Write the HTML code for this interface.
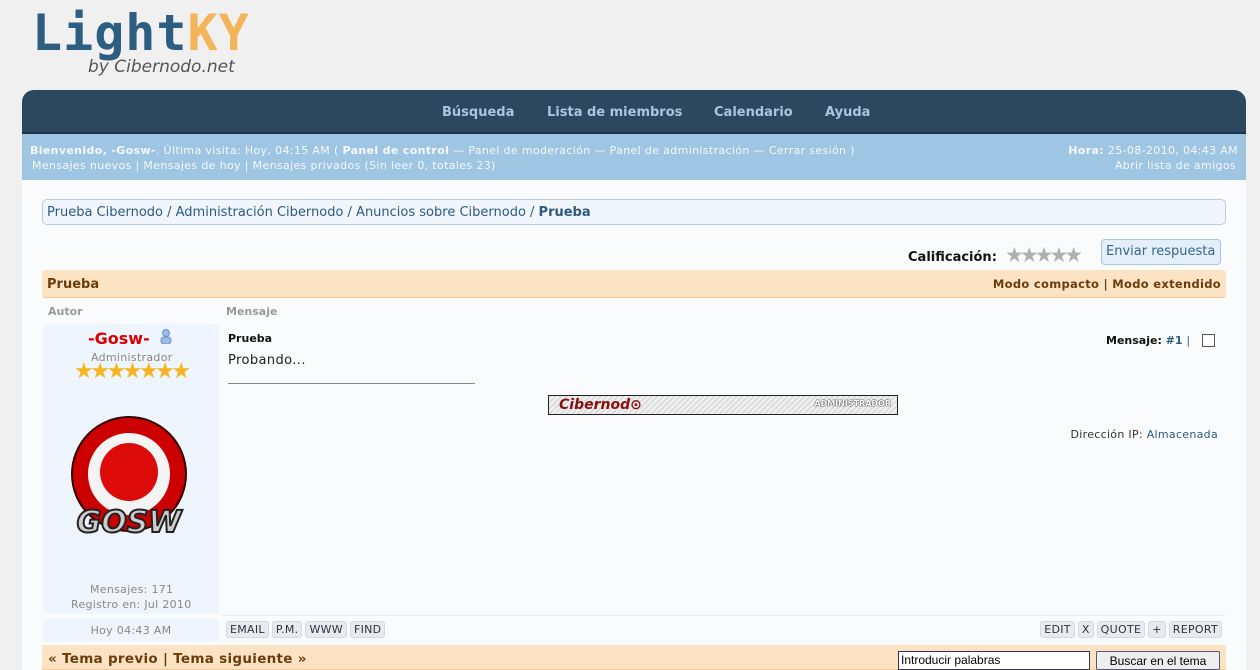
<!DOCTYPE html>
<html><head><meta charset="utf-8"><style>
*{margin:0;padding:0;box-sizing:border-box}
body{width:1260px;height:670px;overflow:hidden;background:#f0f0f0;font-family:"DejaVu Sans","Liberation Sans",sans-serif;font-size:11px;color:#333;position:relative}
.a{position:absolute;white-space:nowrap}
.nav{left:22px;top:90px;width:1224px;height:44px;background:#2c485e;border-radius:12px 12px 0 0;border-bottom:2px solid #1b3247}
.nav span{position:absolute;top:15px;color:#a9c6e0;font-weight:bold;font-size:13px}
.info{left:22px;top:134px;width:1224px;height:46px;background:#9ec5e2;color:#f5f8fb;font-size:11px;letter-spacing:0.35px}
.main{left:22px;top:180px;width:1224px;height:490px;background:#fafbfd}
.crumb{left:42px;top:199px;width:1184px;height:26px;border:1px solid #b8cbdc;border-radius:5px;background:#f0f6fc;color:#2c5a80;font-size:13px;padding:5px 4px}
.bar{background:#fce3c3;border-bottom:1px solid #f2c98e;color:#6b3c0c;font-weight:bold}
.btn{display:inline-block;background:#e8eaf2;border:1px solid #d5d8e4;border-radius:3px;padding:1px 3px;color:#333;font-size:11px;margin-right:3px;letter-spacing:0.3px}
</style></head><body>
<div class="a" style="left:32px;top:4px;font:bold 50px 'DejaVu Sans Mono',monospace;letter-spacing:1px;color:#2d5d80">Light<span style="color:#f4b45a">KY</span></div>
<div class="a" style="left:88px;top:57px;font:italic 17px 'DejaVu Sans',sans-serif;color:#555">by Cibernodo.net</div>

<div class="a nav"><span style="left:420px">Búsqueda</span><span style="left:525px">Lista de miembros</span><span style="left:692px">Calendario</span><span style="left:803px">Ayuda</span></div>
<div class="a info">
<div class="a" style="left:8px;top:10px"><b>Bienvenido, -Gosw-</b>. Última visita: Hoy, 04:15 AM ( <b>Panel de control</b> — Panel de moderación — Panel de administración — Cerrar sesión )</div>
<div class="a" style="left:10px;top:25px">Mensajes nuevos | Mensajes de hoy | Mensajes privados (Sin leer 0, totales 23)</div>
<div class="a" style="right:8px;top:10px"><b>Hora:</b> 25-08-2010, 04:43 AM</div>
<div class="a" style="right:10px;top:25px">Abrir lista de amigos</div>
</div>
<div class="a main"></div>
<div class="a crumb">Prueba Cibernodo / Administración Cibernodo / Anuncios sobre Cibernodo / <b>Prueba</b></div>

<div class="a" style="left:908px;top:250px;font-weight:bold;font-size:13px;color:#111">Calificación:</div>
<div class="a" style="left:1005px;top:243px;font-size:21px;color:#b0b0b0;letter-spacing:-4px">★★★★★</div>
<div class="a" style="left:1101px;top:239px;width:120px;height:26px;background:#e3effa;border:1px solid #a9c7e2;border-radius:4px;color:#3a6688;font-size:13px;padding:4px 4px">Enviar respuesta</div>

<div class="a bar" style="left:42px;top:270px;width:1184px;height:28px;border-radius:3px"><span class="a" style="left:5px;top:7px;font-size:13px">Prueba</span><span class="a" style="right:5px;top:7px;font-size:11.5px;letter-spacing:0.3px">Modo compacto | Modo extendido</span></div>
<div class="a" style="left:48px;top:305px;color:#999;font-weight:bold">Autor</div>
<div class="a" style="left:226px;top:305px;color:#999;font-weight:bold">Mensaje</div>

<div class="a" style="left:43px;top:324px;width:176px;height:290px;background:#eef5fc;border-radius:4px"></div>
<div class="a" style="left:88px;top:329px;color:#d00;font-size:16px;font-weight:bold">-Gosw-</div>
<div class="a" style="left:160px;top:329px;width:12px;height:15px"><svg width="12" height="15"><circle cx="6" cy="4" r="3.5" fill="#9bbce8" stroke="#6b8fc8"/><rect x="1" y="8" width="10" height="7" rx="3" fill="#9bbce8" stroke="#6b8fc8"/></svg></div>
<div class="a" style="left:91px;top:351px;color:#888;letter-spacing:0.3px">Administrador</div>
<div class="a" style="left:74px;top:359px;font-size:22px;color:#f5b420;letter-spacing:-3.5px">★★★★★★★</div>
<svg class="a" style="left:66px;top:414px" width="126" height="124"><circle cx="63" cy="60" r="57" fill="#cc0000" stroke="#300" stroke-width="2"/><circle cx="63" cy="60" r="41" fill="#f4f4f4"/><circle cx="63" cy="58" r="29" fill="#dd0a0a"/><text x="63" y="118" text-anchor="middle" font-family="DejaVu Sans" font-style="italic" font-weight="bold" font-size="30" fill="#ccc" stroke="#222" stroke-width="2">GOSW</text></svg>
<div class="a" style="left:90px;top:583px;color:#888;letter-spacing:0.3px">Mensajes: 171</div>
<div class="a" style="left:71px;top:598px;color:#888;letter-spacing:0.3px">Registro en: Jul 2010</div>
<div class="a" style="left:43px;top:618px;width:176px;height:24px;background:#eef5fc;border-radius:4px;color:#888;text-align:center;padding-top:6px;letter-spacing:0.3px">Hoy 04:43 AM</div>

<div class="a" style="left:228px;top:332px;font-weight:bold;color:#111">Prueba</div>
<div class="a" style="left:228px;top:353px;font-size:13px;color:#222;letter-spacing:0.4px">Probando...</div>
<div class="a" style="left:228px;top:383px;width:247px;height:1px;background:#888"></div>
<div class="a" style="left:548px;top:395px;width:350px;height:20px;border:1px solid #222;background:repeating-linear-gradient(135deg,#ddd 0 2px,#f2f2f2 2px 4px)"><span class="a" style="left:10px;top:1px;font:italic bold 14px 'DejaVu Sans';color:#8a1010">Cibernod⊙</span><span class="a" style="right:6px;top:3px;font-size:8px;color:#fff;font-weight:bold;text-shadow:0 0 1px #000,0 0 1px #000">ADMINISTRADOR</span></div>
<div class="a" style="left:1106px;top:334px;font-weight:bold;color:#111">Mensaje: <span style="color:#2c5a80">#1</span> <span style="color:#2c5a80;font-weight:normal">|</span></div>
<div class="a" style="left:1202px;top:334px;width:13px;height:13px;border:1px solid #555;background:#fff"></div>
<div class="a" style="right:42px;top:428px;color:#333;letter-spacing:0.3px">Dirección IP: <span style="color:#2c5a80">Almacenada</span></div>

<div class="a" style="left:222px;top:615px;width:1004px;height:1px;background:#e8ecf2"></div>
<div class="a" style="left:226px;top:621px"><span class="btn">EMAIL</span><span class="btn">P.M.</span><span class="btn">WWW</span><span class="btn">FIND</span></div>
<div class="a" style="right:38px;top:621px"><span class="btn">EDIT</span><span class="btn">X</span><span class="btn">QUOTE</span><span class="btn">+</span><span class="btn" style="margin:0">REPORT</span></div>

<div class="a bar" style="left:42px;top:645px;width:1184px;height:25px"><span class="a" style="left:6px;top:6px;font-size:13.5px;letter-spacing:0.3px">« Tema previo | Tema siguiente »</span></div>
<div class="a" style="left:898px;top:651px;width:192px;height:19px;background:#fff;border:1px solid #335;font:12px 'Liberation Sans',sans-serif;padding:1px 2px;color:#000">Introducir palabras</div>
<div class="a" style="left:1096px;top:651px;width:124px;height:19px;background:#eee;border:1px solid #557;border-radius:2px;font:12px 'Liberation Sans',sans-serif;text-align:center;padding-top:2px;color:#000">Buscar en el tema</div>
</body></html>
